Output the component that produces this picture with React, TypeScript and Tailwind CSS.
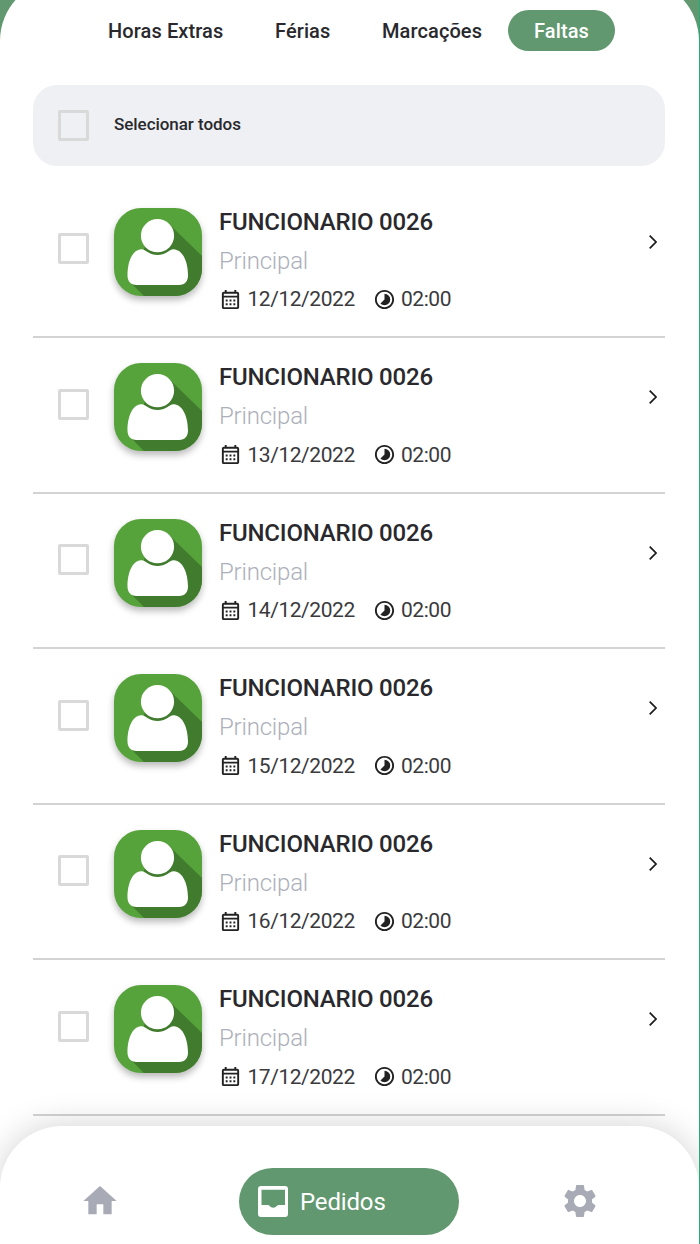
import { MdHome, MdOutlineCalendarMonth, MdSettings, MdTimelapse } from 'react-icons/md'

const TABS = [
  { label: 'Horas Extras', className: 'w-[167px]' },
  { label: 'Férias', className: 'w-[107px]' },
  { label: 'Marcações', className: 'w-[126px]' },
]

const DATES = ['12/12/2022', '13/12/2022', '14/12/2022', '15/12/2022', '16/12/2022', '17/12/2022']

function Checkbox() {
  return <div className="size-[31px] shrink-0 rounded-[2px] border-[3.5px] border-[#d9d9d9]" />
}

function Avatar() {
  return (
    <div className="size-[88px] shrink-0 overflow-hidden rounded-[27px] bg-[#56a33b] shadow-[0_4px_7px_rgba(0,0,0,0.28)]">
      <svg viewBox="0 0 88 88" className="size-full">
        <path d="M55 16L88 48V88H30L18 76L31 38Z" fill="#417b2e" />
        <circle cx="43.5" cy="27.7" r="16.6" fill="#fff" />
        <path
          d="M27 41.200C30 41 31.200 42.600 33.500 44C39.500 48 47.500 48 53.500 44C55.800 42.600 57 41 60 41.200C69 42 74 54 74 67.500C74 73 71 77 65 77H22.500C16.500 77 13.500 73 13.500 67.500C13.500 54 18 42 27 41.200Z"
          fill="#fff"
        />
      </svg>
    </div>
  )
}

function InboxIcon() {
  return (
    <svg viewBox="0 0 30 31" className="h-[31px] w-[30px]" fill="#fff">
      <path
        fillRule="evenodd"
        d="M3 0H27Q30 0 30 3V28Q30 31 27 31H3Q0 31 0 28V3Q0 0 3 0ZM3.500 3.700V19H10C11.500 19 12 21.700 15.200 21.700C18.500 21.700 19 19 20.500 19H27V3.700Z"
      />
    </svg>
  )
}

function AbsenceRow({ date }: { date: string }) {
  return (
    <li className="flex h-[155.5px] border-b-2 border-[#d3d3d3] pt-[25.2px] pl-[25px]">
      <div className="pt-[25.4px]">
        <Checkbox />
      </div>
      <div className="ml-[25px]">
        <Avatar />
      </div>
      <div className="ml-[17px] flex-1 whitespace-nowrap">
        <p className="h-[39px] text-2xl leading-[28px] font-[480] tracking-[-0.2px] text-[#29292d]">FUNCIONARIO 0026</p>
        <p className="h-[38.5px] text-2xl leading-[28px] font-light tracking-[-0.2px] text-[#adb0ba]">Principal</p>
        <div className="flex h-[28px] items-center text-[21px] leading-[28px] tracking-[-0.45px] text-[#3a3a3d]">
          <MdOutlineCalendarMonth className="size-[23px] text-[#222]" />
          <span className="ml-[5.5px] w-[125.5px]">{date}</span>
          <MdTimelapse className="size-[23px] text-[#222]" />
          <span className="ml-[5px]">02:00</span>
        </div>
      </div>
      <svg viewBox="0 0 8 14" className="mt-[27px] mr-[8px] h-[14px] w-[8px]" fill="none" stroke="#1a1a1a" strokeWidth="1.7">
        <path d="M0.700 0.700L7 7L0.700 13.300" />
      </svg>
    </li>
  )
}

export default function App() {
  return (
    <div className="flex h-[1244px] w-[700px] flex-col overflow-hidden border-r border-[#2ba878] bg-[#61986f] font-['Roboto',sans-serif]">
      <main className="-mt-[21px] h-[1147px] shrink-0 rounded-t-[62px] bg-white pt-[31px]">
        {/* Tabs */}
        <nav className="flex h-[41px] items-center pl-[108px] text-xl font-[480] tracking-[0.1px] text-[#29292d]">
          {TABS.map((tab) => (
            <button key={tab.label} className={`text-left whitespace-nowrap ${tab.className}`}>
              {tab.label}
            </button>
          ))}
          <button className="h-[41px] w-[107px] rounded-full bg-[#61986f] text-white">Faltas</button>
        </nav>

        {/* Select all */}
        <div className="mt-[34px] ml-[33px] flex h-[81px] w-[632px] items-center rounded-[24px] bg-[#eff0f4] pl-[25px]">
          <Checkbox />
          <span className="mb-[2px] ml-[25px] text-[17px] font-[480] tracking-[-0.05px] text-[#29292d]">Selecionar todos</span>
        </div>

        <ul className="mt-[16.6px] ml-[33px] w-[632px]">
          {DATES.map((date) => (
            <AbsenceRow key={date} date={date} />
          ))}
        </ul>
      </main>

      {/* Bottom bar */}
      <div className="h-[118px] bg-white">
        <footer className="flex h-[118px] rounded-t-[62px] bg-white pt-[42px] shadow-[0_0_34px_rgba(0,0,0,0.18)]">
          <MdHome className="mt-[13px] ml-[80px] size-[40px] text-[#a8abb5]" />
          <button className="ml-[119px] flex h-[67px] w-[220px] items-center rounded-full bg-[#61986f] pl-[19px] text-2xl tracking-[-0.15px] text-white">
            <InboxIcon />
            <span className="ml-[12px]">Pedidos</span>
          </button>
          <MdSettings className="mt-[13px] ml-[101px] size-[40px] text-[#a8abb5]" />
        </footer>
      </div>
    </div>
  )
}
